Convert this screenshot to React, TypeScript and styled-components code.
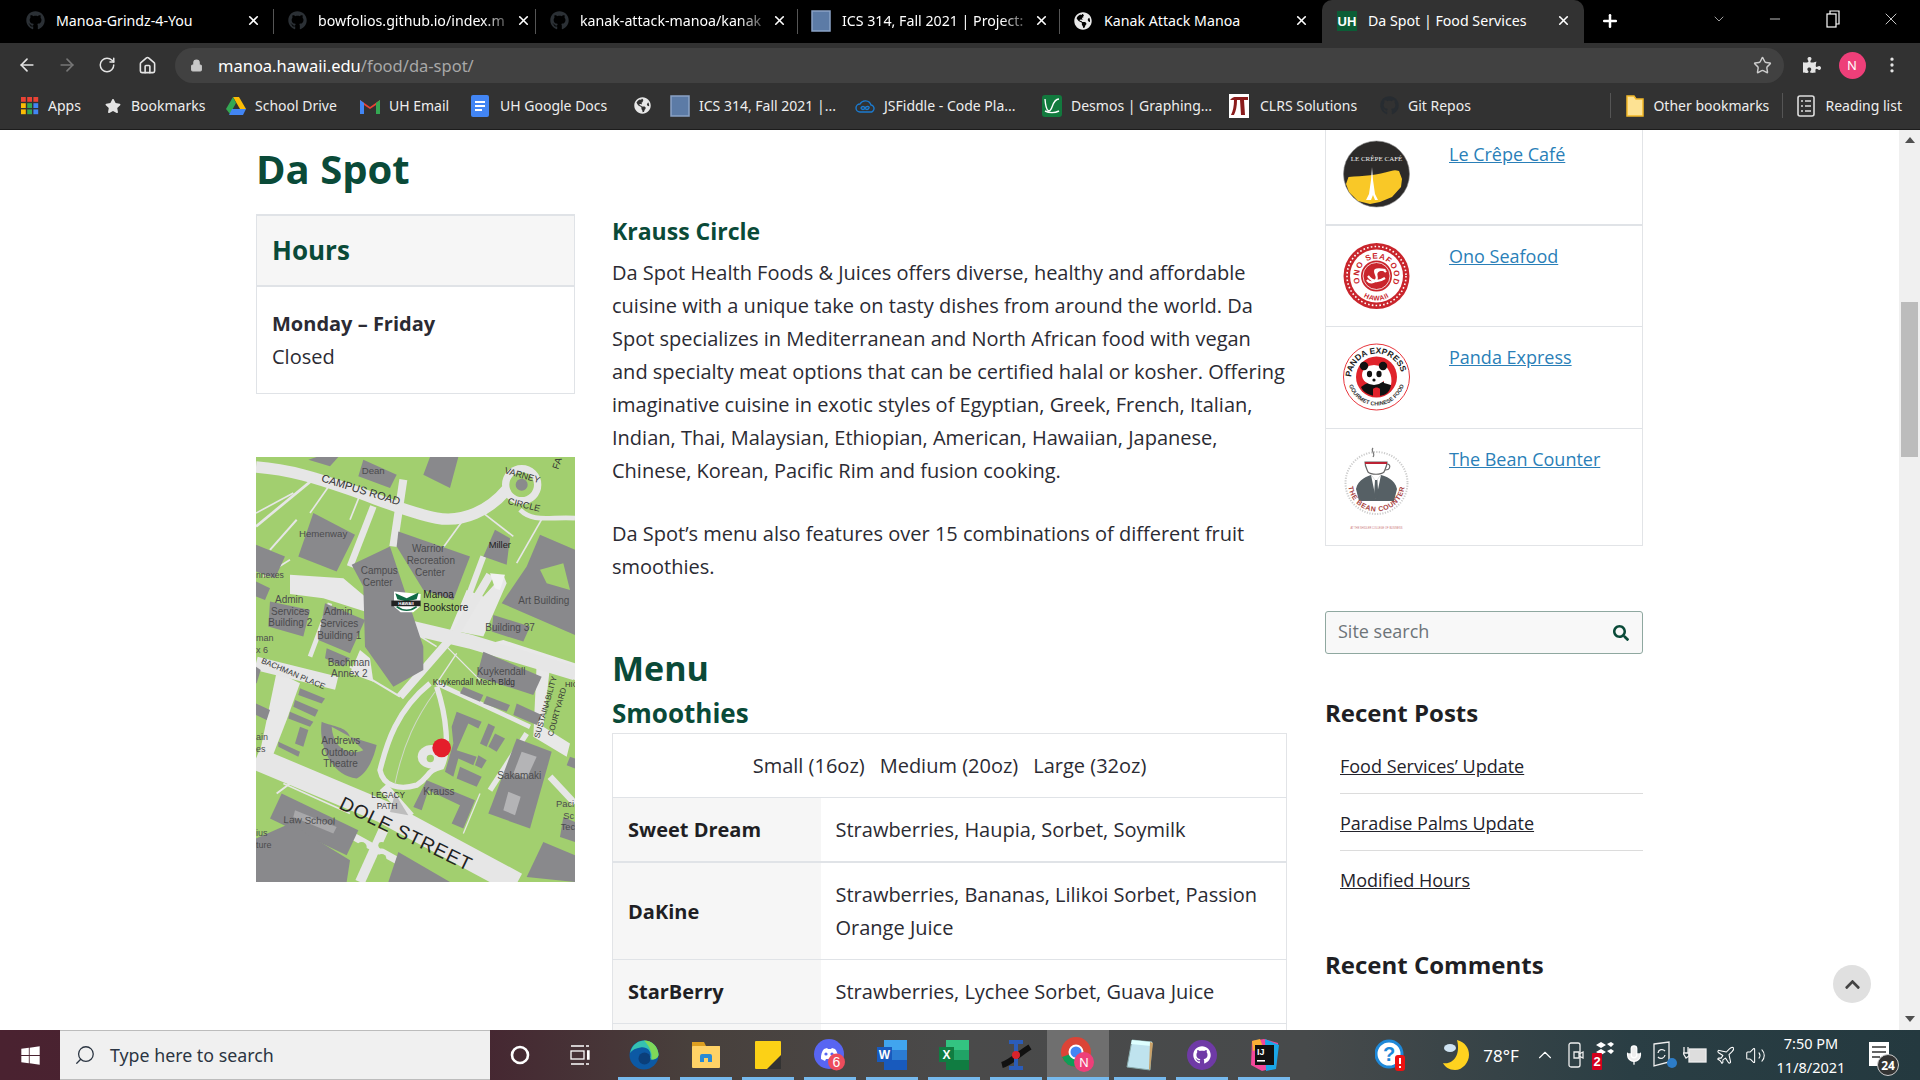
import React from "react";
import styled, { createGlobalStyle } from "styled-components";
import { ArrowLeft, ArrowRight, RotateCw, Home, Lock, Star, MoreVertical, Plus, X, Minus, ChevronDown, ChevronUp, Search, Mic, Plane, Volume2 } from "lucide-react";
import { FaGithub, FaWindows, FaGlobeAmericas, FaPuzzlePiece, FaStar, FaChevronUp, FaSearch } from "react-icons/fa";

const Global = createGlobalStyle`
  html, body { margin: 0; padding: 0; width: 1920px; height: 1080px; overflow: hidden; background: #fff; }
  * { box-sizing: border-box; }
`;
const UI = `"Noto Sans", "Open Sans", sans-serif`;
const SITE = `"Open Sans", "Noto Sans", sans-serif`;
const GREEN = "#0a4a38";
const Screen = styled.div`width:1920px;height:1080px;display:flex;flex-direction:column;overflow:hidden;font-family:${SITE};`;

/* Browser chrome */
const TabStrip = styled.div`height:43px;background:#000;display:flex;align-items:stretch;padding-left:12px;color:#fff;font-family:${UI};flex:none;`;
const Tab = styled.div<{ $active?: boolean }>`
  width:262px;height:43px;display:flex;align-items:center;gap:11px;padding:0 13px 2px ${p=>p.$active?"15px":"13px"};
  position:relative;font-size:14.2px;background:${p=>p.$active?"#323232":"transparent"};
  border-radius:${p=>p.$active?"10px 10px 0 0":"0"};
  ${p=>p.$active?"":"&::after{content:'';position:absolute;right:0;top:9px;bottom:9px;width:1px;background:#555;}"}
`;
const LastTab = styled(Tab)`&::after{display:none;}`;
const TabIcon = styled.span`width:20px;height:20px;display:flex;align-items:center;justify-content:center;flex:none;`;
const TabTitle = styled.span<{ $fade?: boolean }>`flex:1;white-space:nowrap;${p=>p.$fade?"-webkit-mask-image:linear-gradient(90deg,#000 88%,rgba(0,0,0,.35));":""}`;
const TabClose = styled(X)`flex:none;width:15px;height:15px;stroke-width:2.6;`;
const NewTab = styled.div`width:52px;padding-bottom:2px;display:flex;align-items:center;justify-content:center;`;
const WindowControls = styled.div`margin-left:auto;display:flex;align-items:flex-start;color:#eee;`;
const WinBtn = styled.div<{ $w: number }>`width:${p=>p.$w}px;height:38px;display:flex;align-items:center;justify-content:center;`;

const Toolbar = styled.div`height:44px;background:#323232;display:flex;align-items:center;padding:0 8px 0 7px;color:#ddd;flex:none;`;
const ToolBtn = styled.div<{ $dim?: boolean }>`width:40px;height:40px;display:flex;align-items:center;justify-content:center;color:${p=>p.$dim?"#777":"#e4e4e4"};flex:none;`;
const Address = styled.div`flex:1;height:35px;margin-left:8px;margin-right:8px;background:#414141;border-radius:18px;display:flex;align-items:center;padding:0 12px 0 15px;font-family:${UI};font-size:16.5px;color:#fff;gap:15px;`;
const Url = styled.span`flex:1;`;
const UrlDim = styled.span`color:#a8a8a8;`;
const Avatar = styled.div`width:27px;height:27px;border-radius:50%;background:#ee3f79;display:flex;align-items:center;justify-content:center;font-size:13px;color:#fff;font-family:${UI};`;

const Bookmarks = styled.div`height:43px;background:#323232;display:flex;align-items:center;padding:0 0 5px 20px;color:#eee;font-family:${UI};font-size:14px;flex:none;border-bottom:1px solid #1c1c1c;`;
const Bookmark = styled.div<{ $w?: number; $gap?: number; $pl?: number }>`width:${p=>p.$w?p.$w+"px":"auto"};display:flex;align-items:center;gap:${p=>p.$gap??9}px;padding-left:${p=>p.$pl??0}px;white-space:nowrap;flex:none;`;
const BmIcon = styled.span`width:20px;height:20px;display:flex;align-items:center;justify-content:center;flex:none;`;
const BmSep = styled.span`width:1px;height:25px;background:#555;flex:none;`;
const BmRight = styled.div`margin-left:auto;display:flex;align-items:center;padding-right:18px;`;

/* Page */
const Page = styled.div`flex:1;min-height:0;display:flex;position:relative;overflow:hidden;background:#fff;color:#2b2b33;font-size:20px;line-height:33px;`;
const Viewport = styled.div`flex:1;padding-left:256px;overflow:hidden;`;
const Shell = styled.div`display:flex;gap:38px;align-items:flex-start;`;
const MainArea = styled.div`width:1031px;flex:none;padding-top:15px;`;
const PageTitle = styled.h1`margin:0 0 21px;font-size:40px;line-height:48px;font-weight:700;color:${GREEN};`;
const Columns = styled.div`display:flex;gap:37px;align-items:flex-start;`;
const LeftCol = styled.div`width:319px;flex:none;`;
const HoursCard = styled.div`border:1px solid #e0e3e7;border-top-width:2px;`;
const HoursHead = styled.div`height:71px;background:#f6f6f6;border-bottom:2px solid #e0e3e7;display:flex;align-items:center;padding-left:15px;font-size:26px;font-weight:700;color:${GREEN};`;
const HoursBody = styled.div`padding:20px 15px 13px;height:106px;`;
const Strong = styled.div`font-weight:700;`;
const MapFrame = styled.div`margin-top:63px;width:319px;height:425px;`;
const MapSvg = styled.svg`display:block;width:100%;height:100%;`;
const Article = styled.div`width:675px;flex:none;`;
const Location = styled.h3`margin:0 0 8px;font-size:23px;line-height:34px;font-weight:700;color:${GREEN};`;
const Para = styled.p<{ $last?: boolean }>`margin:0 0 ${p=>p.$last?0:30}px;`;
const MenuTitle = styled.h2`margin:63px 0 5px;font-size:34px;line-height:44px;font-weight:700;color:${GREEN};`;
const Sub = styled.h3`margin:0 0 2px;font-size:26px;line-height:36px;font-weight:700;color:${GREEN};`;
const MenuTable = styled.table`width:675px;border-collapse:collapse;table-layout:fixed;border:1px solid #e2e4e7;`;
const NameCol = styled.col`width:208px;`;
const Row = styled.tr<{ $thick?: boolean }>`border-bottom:${p=>p.$thick?"2px":"1px"} solid #e0e3e7;`;
const SizeCell = styled.td`padding:15px;text-align:center;`;
const NameCell = styled.th`padding:15px;background:#f6f6f6;text-align:left;font-weight:700;color:#1f1f24;`;
const DescCell = styled.td`padding:15px;`;
const Gap = styled.span`display:inline-block;width:15px;`;

const Sidebar = styled.aside`width:318px;flex:none;`;
const Places = styled.div`margin-top:-7px;border:1px solid #e2e4e7;border-top:none;`;
const Place = styled.div<{ $h: number; $thick?: boolean; $pt?: number }>`height:${p=>p.$h}px;display:flex;align-items:flex-start;padding:${p=>p.$pt??15}px 0 0 17px;gap:39px;border-bottom:${p=>p.$thick?"2px":"1px"} solid #e0e3e7;&:last-child{border-bottom:none;}`;
const Logo = styled.svg<{ $mt?: number }>`width:67px;flex:none;margin-top:${p=>p.$mt??1}px;`;
const PlaceLink = styled.a`color:#2a7fb8;text-decoration:underline;font-size:18px;line-height:30px;`;
const SearchBox = styled.div`margin-top:65px;height:43px;border:1px solid #8fa8a0;border-radius:3px;background:#f8f8f8;display:flex;align-items:center;justify-content:space-between;padding:0 13px 3px 12px;color:#6d7478;font-size:18px;`;
const SearchIcon = styled(FaSearch)`margin-top:3px;`;
const WidgetTitle = styled.h3<{ $mt: number }>`margin:${p=>p.$mt}px 0 0;font-size:24px;line-height:36px;font-weight:700;color:#1f1f24;`;
const PostList = styled.ul`list-style:none;margin:6px 0 0;padding:0 0 0 15px;`;
const Post = styled.li`padding:15px 0 13px;line-height:28px;font-size:18px;border-bottom:1px solid #dcdcdc;&:last-child{border-bottom:none;}`;
const PostLink = styled.a`color:#23232b;text-decoration:underline;`;
const BackTop = styled.div`position:absolute;left:1833px;top:835px;width:38px;height:38px;border-radius:50%;background:#e0e0e0;color:#444;display:flex;align-items:center;justify-content:center;`;
const Scrollbar = styled.div`width:21px;flex:none;background:#f0f0f0;display:flex;flex-direction:column;align-items:center;justify-content:space-between;padding:7px 0 8px;position:relative;`;
const Thumb = styled.div`position:absolute;left:2px;right:2px;top:172px;height:155px;background:#bcbcbc;`;
const ArrowUp = styled.div`width:0;height:0;border:5px solid transparent;border-bottom:6px solid #505050;border-top:none;`;
const ArrowDown = styled.div`width:0;height:0;border:5px solid transparent;border-top:6px solid #505050;border-bottom:none;`;

/* Taskbar */
const Taskbar = styled.div`height:50px;flex:none;display:flex;align-items:stretch;background:linear-gradient(90deg,#4a2230 0%,#452430 24%,#48403c 36%,#4a4a4a 50%,#474a4b 68%,#2a3e44 85%,#24393f 100%);color:#fff;font-family:${UI};`;
const StartBtn = styled.div`width:60px;display:flex;align-items:center;justify-content:center;`;
const SearchBar = styled.div`width:430px;background:#f0f0f0;border-top:1px solid #bcbcbc;border-bottom:1px solid #bcbcbc;display:flex;align-items:center;gap:14px;padding-left:14px;color:#2b3542;font-size:17.8px;`;
const MirrorSearch = styled(Search)`transform:scaleX(-1);`;
const SysCell = styled.div<{ $w: number }>`width:${p=>p.$w}px;display:flex;align-items:center;justify-content:center;flex:none;`;
const AppCell = styled.div<{ $on?: boolean }>`width:62px;display:flex;align-items:center;justify-content:center;position:relative;flex:none;background:${p=>p.$on?"#6f6f6f":"transparent"};
  &::after{content:'';position:absolute;left:${p=>p.$on?0:5}px;right:${p=>p.$on?0:5}px;bottom:0;height:3px;background:#76b9ed;}`;
const Tray = styled.div`margin-left:auto;display:flex;align-items:stretch;padding-right:14px;`;
const TrayCell = styled.div<{ $w: number }>`width:${p=>p.$w}px;display:flex;align-items:center;justify-content:center;flex:none;position:relative;`;
const Temp = styled.span`font-size:17px;`;
const Clock = styled.div`text-align:center;font-size:14.5px;line-height:24px;`;
const Badge = styled.span`position:absolute;right:7px;bottom:4px;width:22px;height:22px;border-radius:50%;background:#333;border:1.5px solid #ccc;font-size:12px;font-weight:700;display:flex;align-items:center;justify-content:center;`;

const Gh = ({ c = "#2b3035" }: { c?: string }) => <FaGithub size={19} color={c} />;
const Sq = () => (<svg width="20" height="22" viewBox="0 0 20 22"><rect x="1" y="1" width="18" height="20" fill="#5c7ba6" stroke="#8aa3c6" strokeWidth="1.5"/></svg>);
const UhIcon = () => (<svg width="20" height="20" viewBox="0 0 20 20"><rect width="20" height="20" fill="#0b5d36"/><text x="10" y="15" fontSize="13" fontWeight="700" fill="#fff" textAnchor="middle" fontFamily="Liberation Sans">UH</text></svg>);
const Apps = () => (<svg width="18" height="18" viewBox="0 0 18 18">{[["#ea4335","#ea4335","#ea4335"],["#fbbc05","#34a853","#4285f4"],["#fbbc05","#34a853","#4285f4"]].flatMap((r,y)=>r.map((c,x)=><rect key={x+"-"+y} x={x*6.2} y={y*6.2} width="4.8" height="4.8" fill={c}/>))}</svg>);
const Drive = () => (<svg width="20" height="18" viewBox="0 0 20 18"><path d="M7 0h6l7 12h-6z" fill="#fbbc05"/><path d="M7 0l3 6-6 11-4-5z" fill="#34a853"/><path d="M6 12h14l-3 6H3z" fill="#4285f4"/></svg>);
const Gmail = () => (<svg width="20" height="16" viewBox="0 0 20 16"><path d="M0 2l10 7 10-7v14h-4V7l-6 4-6-4v9H0z" fill="#ea4335"/><path d="M0 2v14h4V5z" fill="#4285f4"/><path d="M16 5v11h4V2z" fill="#34a853"/></svg>);
const Docs = () => (<svg width="18" height="22" viewBox="0 0 18 22"><rect width="18" height="22" rx="2" fill="#4285f4"/><path d="M4 7h10M4 11h10M4 15h7" stroke="#fff" strokeWidth="2"/></svg>);
const Fiddle = () => (<svg width="20" height="18" viewBox="0 0 20 18" fill="none" stroke="#1b7bd0" strokeWidth="1.4"><path d="M5 15a4 4 0 0 1 0-8 6 6 0 0 1 11 1 3.5 3.5 0 0 1-1 7z"/><path d="M6 11c1-2 3-2 4 0s3 2 4 0-3-2-4 0-3 2-4 0z"/></svg>);
const Desmos = () => (<svg width="20" height="22" viewBox="0 0 20 22"><rect width="20" height="22" rx="3" fill="#127a3e"/><path d="M3 4c1 14 5 14 7 8s5-8 7-8M3 16c4 2 10 2 14 0" stroke="#fff" strokeWidth="1.4" fill="none"/></svg>);
const Pi = () => (<svg width="20" height="24" viewBox="0 0 20 24"><rect width="20" height="24" fill="#fff"/><path d="M1 6c3-4 6-3 9-3h9v3h-4l1 15h-4l-1-15H8c0 6-1 11-3 15H2c2-4 3-9 3-15-2 0-3 0-4 0z" fill="#8a1c1c"/></svg>);
const Folder = () => (<svg width="18" height="22" viewBox="0 0 18 22"><path d="M1 1h7l2 3h7v17H1z" fill="#fde293" stroke="#f2b829" strokeWidth="1.5"/></svg>);
const Reading = () => (<svg width="18" height="22" viewBox="0 0 18 22" fill="none" stroke="#ddd" strokeWidth="1.6"><rect x="1" y="1" width="16" height="20" rx="2"/><path d="M4 6h2M8 6h6M4 11h2M8 11h6M4 16h2M8 16h6"/></svg>);
const Restore = () => (<svg width="14" height="18" viewBox="0 0 14 18" fill="none" stroke="#fff" strokeWidth="1.2"><rect x="1" y="4" width="9" height="13"/><path d="M4 4V1h9v13h-3"/></svg>);

const Edge = () => (<svg width="30" height="30" viewBox="0 0 30 30"><circle cx="15" cy="15" r="14.5" fill="#0c59a4"/><path d="M1 13C3 4 10 .5 15 .5c8 0 14 6 14.5 14 0 3-3 5-7 5-2 0-3-1-1-3 1-6-4-10-10-9C7 8 3 10 1 13z" fill="#35c1b1"/><path d="M15 .5c8 0 14 6 14.5 14 0 3-3 5-7 5 1-6-1-12-7.5-19z" fill="#7fd858"/><circle cx="15.5" cy="18.5" r="6" fill="#0b3f7a"/></svg>);
const Explorer = () => (<svg width="28" height="26" viewBox="0 0 28 26"><path d="M0 0h12l2 4h14v4H0z" fill="#dd9f20"/><rect y="4" width="28" height="22" rx="1" fill="#ffd266"/><path d="M8 20v-6a2 2 0 0 1 2-2h8a2 2 0 0 1 2 2v6h-4v-4h-4v4z" fill="#2a8ad4"/></svg>);
const Sticky = () => (<svg width="26" height="28" viewBox="0 0 26 28"><rect width="26" height="28" rx="1" fill="#fcd116"/><path d="M26 14v14H12z" fill="#333"/></svg>);
const Discord = () => (<svg width="32" height="32" viewBox="0 0 32 32"><circle cx="15" cy="15" r="15" fill="#5865f2"/><path d="M7 20c-.3-4 1-8 3-10l3-1 1 1h3l1-1 3 1c2 2 3 6 3 10l-3 2-1-2h-8l-1 2z" fill="#fff"/><circle cx="12" cy="15" r="1.6" fill="#5865f2"/><circle cx="18" cy="15" r="1.6" fill="#5865f2"/><circle cx="22.5" cy="23" r="8.5" fill="#ed4c5c"/><text x="22.5" y="28" fontSize="14" fill="#fff" textAnchor="middle" fontFamily="Liberation Sans">6</text></svg>);
const Office = ({ a, b, c, l }: { a: string; b: string; c: string; l: string }) => (<svg width="30" height="30" viewBox="0 0 30 30"><rect x="7" width="23" height="10" fill={a}/><rect x="7" y="10" width="23" height="10" fill={b}/><rect x="7" y="20" width="23" height="10" fill={c}/><rect y="7" width="15" height="15" fill={c}/><text x="7.5" y="19" fontSize="12" fontWeight="700" fill="#fff" textAnchor="middle" fontFamily="Liberation Sans">{l}</text></svg>);
const Snip = () => (<svg width="32" height="32" viewBox="0 0 32 32"><path d="M2 26C10 24 20 14 30 8" stroke="#111" strokeWidth="6" fill="none"/><path d="M9 3h14M9 29h14M16 3v26" stroke="#2b5cb8" strokeWidth="4"/><circle cx="16" cy="16" r="4" fill="#d8232a"/></svg>);
const Chrome = () => (<svg width="34" height="36" viewBox="0 0 34 36"><circle cx="15" cy="15" r="15" fill="#db4437"/><path d="M15 15L1 20a15 15 0 0 0 14 10z" fill="#0f9d58"/><path d="M15 15l12 8a15 15 0 0 1-12 7z" fill="#fbbc05"/><circle cx="15" cy="15" r="6.5" fill="#4285f4" stroke="#fff" strokeWidth="2"/><circle cx="23" cy="25" r="10" fill="#ee3f79"/><text x="23" y="30" fontSize="13" fill="#fff" textAnchor="middle" fontFamily="Liberation Sans">N</text></svg>);
const Notepad = () => (<svg width="28" height="32" viewBox="0 0 28 32"><path d="M6 1l20 2-2 28L1 28z" fill="#bfe3ee" stroke="#8aa" strokeWidth="1"/><path d="M6 1l20 2-1 4L5 5z" fill="#dff"/><path d="M24 3l3 1-3 27-1-1z" fill="#caa26a"/></svg>);
const GitHubApp = () => (<svg width="30" height="30" viewBox="0 0 30 30"><circle cx="15" cy="15" r="15" fill="#6f3aa6"/><g transform="translate(6 6) scale(.0352)"><path fill="#fff" d="M256 8C119 8 8 119 8 256c0 110 71 203 170 236 12 2 17-5 17-12v-44c-69 15-84-29-84-29-11-29-28-37-28-37-22-15 2-15 2-15 25 2 38 26 38 26 22 38 58 27 72 21 2-16 9-27 16-33-55-6-113-28-113-122 0-27 10-49 25-66-2-6-11-31 2-65 0 0 21-7 68 25 20-6 41-8 62-8s42 3 62 8c47-32 68-25 68-25 14 34 5 59 2 65 16 17 25 39 25 66 0 95-58 116-113 122 9 8 17 23 17 46v68c0 7 4 14 17 12 99-33 170-126 170-236C504 119 393 8 256 8z"/></g></svg>);
const Idea = () => (<svg width="30" height="32" viewBox="0 0 30 32"><path d="M3 2l12-2 14 4-2 24-14 4L2 26z" fill="#f5479b"/><path d="M16 0l14 6-3 24-10 2z" fill="#1aa6e8"/><path d="M3 2l8-2 3 8-10 4z" fill="#fbb034"/><rect x="6" y="6" width="19" height="20" fill="#111"/><text x="8" y="16" fontSize="9" fontWeight="700" fill="#fff" fontFamily="Liberation Sans">IJ</text><rect x="8" y="21" width="8" height="1.6" fill="#fff"/></svg>);
const Help = () => (<svg width="30" height="32" viewBox="0 0 30 32"><circle cx="14" cy="15" r="13" fill="#fff" stroke="#1e88d8" strokeWidth="3"/><text x="14" y="22" fontSize="20" fontWeight="700" fill="#1e88d8" textAnchor="middle" fontFamily="Liberation Sans">?</text><rect x="20" y="16" width="10" height="16" rx="3" fill="#e11"/><rect x="24" y="19" width="2" height="6" fill="#fff"/><rect x="24" y="27" width="2" height="2" fill="#fff"/></svg>);
const Moon = () => (<svg width="26" height="30" viewBox="0 0 26 30"><path d="M14 0c8 2 12 8 12 15s-6 15-14 15C6 30 2 27 0 23c10 2 18-8 14-23z" fill="#ffd21f"/><ellipse cx="7" cy="8" rx="6" ry="4" fill="#cfe3f2"/></svg>);
const MeetNow = () => (<svg width="16" height="26" viewBox="0 0 16 26" fill="none" stroke="#eee" strokeWidth="1.3"><rect x="1" y="1" width="11" height="24" rx="2"/><path d="M6 10h5v6H6zM11 12l4-2v6l-4-2z"/></svg>);
const Dropbox = () => (<svg width="22" height="30" viewBox="0 0 22 30"><path d="M9 2l5 3-5 3-5-3zM19 2l3 2-3 3-4-3zM9 9l5 3-5 3-5-3zM19 9l3 2-3 3-4-3z" fill="#fff"/><rect y="13" width="10" height="17" rx="1" fill="#d4001c"/><text x="5" y="26" fontSize="13" fontWeight="700" fill="#fff" textAnchor="middle" fontFamily="Liberation Sans">2</text></svg>);
const Sync = () => (<svg width="26" height="28" viewBox="0 0 26 28" fill="none" stroke="#eee" strokeWidth="1.3"><path d="M2 3l15-2v20L2 25z"/><path d="M6 12a4 4 0 0 1 7-2M13 14a4 4 0 0 1-7 2"/><circle cx="20" cy="22" r="5" fill="#2d7dc8" stroke="none"/></svg>);
const Battery = () => (<svg width="24" height="20" viewBox="0 0 24 20" fill="none" stroke="#eee" strokeWidth="1.3"><rect x="6" y="4" width="17" height="13" fill="#ddd"/><path d="M1 2v6M5 2v6M0 8h6v3l-3 2z"/></svg>);
const NoteIcon = () => (<svg width="20" height="26" viewBox="0 0 20 26"><path d="M0 0h20v24H0z" fill="#fff"/><path d="M3 5h14M3 10h14M3 15h8" stroke="#333" strokeWidth="1.6"/></svg>);

const CampusMap = () => {
  const b = "#89898c";
  const bldg = [
    "340,30 440,75 420,115 325,80",
    "540,22 625,22 600,115 520,75",
    "200,22 265,22 240,50 175,30",
    "190,190 315,255 260,365 145,320",
    "420,290 520,590 520,660 430,710 345,590 340,410 305,345",
    "445,245 660,320 610,450 520,420 440,290",
    "735,240 780,265 770,345 700,320",
    "870,255 975,300 975,555 755,460 830,350",
    "18,285 105,320 75,385 18,365",
    "18,395 60,415 45,450 18,440",
    "60,455 180,480 160,560 55,530",
    "225,460 345,510 300,610 205,570",
    "230,595 300,625 280,650 225,625",
    "730,495 840,530 820,575 725,545",
    "700,605 875,680 850,735 680,680",
    "640,710 700,735 690,755 630,730",
    "710,738 780,765 770,785 700,760",
    "800,760 875,795 860,825 790,795",
    "620,785 695,815 685,835 655,820 620,900 680,920 670,945 625,925 610,980 585,965 610,880 605,830",
    "715,820 735,830 710,890 690,880",
    "735,850 765,865 740,905 715,890",
    "685,915 710,930 695,955 675,945",
    "630,950 695,980 680,1010 620,985",
    "530,990 675,1050 640,1135 605,1120 630,1065 535,1020 515,1080 490,1070",
    "800,865 905,905 840,1135 715,1090",
    "150,715 225,745 215,760 145,735",
    "135,750 205,780 195,800 130,770",
    "120,785 190,815 180,830 115,805",
    "150,830 175,840 160,890 135,880",
    "85,875 150,905 145,920 85,890",
    "18,760 60,780 50,810 18,795",
    "95,1030 325,1140 290,1215 60,1105",
    "18,1165 120,1120 300,1230 290,1295 18,1295",
    "445,1205 600,1295 415,1295",
    "880,1175 975,1215 975,1295 830,1280",
    "960,920 975,925 975,955 950,945",
    "940,1100 975,1115 975,1175 930,1160",
    "18,650 32,660 20,700 18,700",
  ];
  const plazas = [
    "120,375 280,385 345,440 345,485 220,445 120,432",
    "650,420 700,440 760,375 770,400 700,560 600,540",
    "80,665 150,700 110,810 65,925 30,905",
    "330,600 360,625 370,695 300,670",
    "760,570 975,640 975,690 680,590",
    "860,640 900,650 880,830 960,880 950,920 850,860",
  ];
  const roads: [string, number][] = [
    ["M18 52 C120 60 200 85 300 120 S480 190 560 205 S720 180 770 120", 34],
    ["M18 925 L400 1085 L800 1300", 68],
    ["M470 530 L660 575 L975 670", 42],
    ["M18 640 L260 700", 40],
    ["M180 620 L240 460", 14],
    ["M450 740 L620 545 L720 375", 24],
    ["M460 90 L430 290", 24],
    ["M370 170 L300 350", 20],
    ["M700 320 L640 480", 18],
    ["M810 180 C850 220 900 200 975 205", 14],
    ["M830 850 L720 1020", 16],
    ["M560 700 L840 830", 14],
    ["M300 650 L450 740", 6],
    ["M400 1010 L480 1100", 30],
    ["M900 980 L975 1060", 20],
    ["M330 1295 L400 1140", 30],
    ["M240 1120 L440 1230", 22],
    ["M18 230 L200 80", 8], ["M18 190 L130 130", 5], ["M60 300 L140 210", 6],
    ["M250 90 L180 190", 5], ["M340 110 L300 210", 5], ["M640 210 L560 320", 5],
    ["M700 190 L790 260", 5], ["M590 590 L700 700", 4], ["M620 610 L560 700", 4],
    ["M480 540 L560 590", 5], ["M880 200 L800 340", 5], ["M640 1150 L690 1030", 4],
    ["M40 380 L120 330", 5], ["M100 1000 L300 1090", 5], ["M120 1000 L80 1030", 6],
  ];
  return (
    <MapSvg viewBox="18 22 957 1273" preserveAspectRatio="none" fontFamily="Liberation Sans" fill="#4c4c4e">
      <rect x="18" y="22" width="957" height="1273" fill="#a2cf6f" />
      {plazas.map((p, i) => <polygon key={i} points={p} fill="#e8e8e8" />)}
      {roads.map(([d, w], i) => <path key={i} d={d} fill="none" stroke="#e6e6e6" strokeWidth={w} />)}
      <path d="M540 700 C440 780 410 880 390 960 C400 1010 450 1020 500 1005 C540 980 530 960 575 950 C600 900 590 800 560 710" fill="none" stroke="#e6e6e6" strokeWidth="16" />
      <path d="M555 725 C500 800 460 880 435 1000" fill="none" stroke="#cfd9c6" strokeWidth="3" />
      <ellipse cx="545" cy="920" rx="42" ry="35" fill="#e6e6e6" />
      <circle cx="541" cy="925" r="11" fill="#a2cf6f" />
      <circle cx="815" cy="105" r="48" fill="#a2cf6f" stroke="#e6e6e6" strokeWidth="22" />
      <circle cx="815" cy="105" r="18" fill="#8a8a8c" />
      {bldg.map((p, i) => <polygon key={i} points={p} fill={b} />)}
      <path d="M215 815 C205 880 240 975 320 985 C350 970 370 930 380 885 L300 860 C290 830 250 830 215 815z" fill={b} />
      <path d="M245 830 C250 890 290 920 340 900 L300 860 Z" fill="#a2cf6f" />
      <path d="M870 360 L890 400 L960 420 L940 340" fill="#a2cf6f" />
      <polygon points="765,375 750,420 735,415 720,370" fill="#f1f1f1" />
      <polygon points="815,905 860,920 830,985 790,970" fill="#b4b4b6" />
      <polygon points="775,1025 812,1040 795,1095 760,1080" fill="#b4b4b6" />
      <polygon points="135,1080 260,1130 250,1150 130,1100" fill="#a8a8aa" />
      <circle cx="335" cy="1190" r="15" fill="#a2cf6f" /><circle cx="395" cy="1185" r="10" fill="#a2cf6f" /><circle cx="395" cy="1225" r="14" fill="#a2cf6f" />
      <path d="M435 1030 L475 1095 L420 1085z" fill="#bdbdbd" />
      <text transform="translate(212 95) rotate(17)" fontSize="33" fill="#333">CAMPUS ROAD</text>
      <text transform="translate(264 1073) rotate(26)" fontSize="58" fill="#222" letterSpacing="3">DOLE STREET</text>
      <text transform="translate(32 638) rotate(23)" fontSize="24" fill="#333">BACHMAN PLACE</text>
      <text x="762" y="70" transform="rotate(16 762 70)" fontSize="27" fill="#333">VARNEY</text>
      <text x="772" y="162" transform="rotate(14 772 162)" fontSize="27" fill="#333">CIRCLE</text>
      <text x="335" y="72" fontSize="29">Dean</text>
      <text x="147" y="262" fontSize="29">Hemenway</text>
      <text x="486" y="307" fontSize="30">Warrior</text>
      <text x="470" y="342" fontSize="30">Recreation</text>
      <text x="495" y="377" fontSize="30">Center</text>
      <text x="332" y="372" fontSize="30">Campus</text>
      <text x="338" y="407" fontSize="30">Center</text>
      <text x="716" y="295" fontSize="28" fill="#222">Miller</text>
      <text x="520" y="445" fontSize="30" fill="#222">Manoa</text>
      <text x="520" y="482" fontSize="30" fill="#222">Bookstore</text>
      <text x="805" y="462" fontSize="30">Art Building</text>
      <text x="706" y="542" fontSize="30">Building 37</text>
      <text x="18" y="384" fontSize="26">nnexes</text>
      <text x="75" y="458" fontSize="30">Admin</text><text x="63" y="494" fontSize="30">Services</text><text x="55" y="529" fontSize="30">Building 2</text>
      <text x="222" y="495" fontSize="30">Admin</text><text x="210" y="531" fontSize="30">Services</text><text x="202" y="566" fontSize="30">Building 1</text>
      <text x="233" y="647" fontSize="30">Bachman</text><text x="243" y="682" fontSize="30">Annex 2</text>
      <text x="18" y="573" fontSize="27">man</text><text x="18" y="608" fontSize="27">x 6</text>
      <text x="680" y="674" fontSize="30">Kuykendall</text>
      <text x="548" y="705" fontSize="25" fill="#333">Kuykendall Mech Bldg</text>
      <text x="214" y="882" fontSize="30">Andrews</text><text x="214" y="917" fontSize="30">Outdoor</text><text x="220" y="952" fontSize="30">Theatre</text>
      <text x="364" y="1044" fontSize="25" fill="#333">LEGACY</text><text x="380" y="1075" fontSize="25" fill="#333">PATH</text>
      <text x="520" y="1034" fontSize="30">Krauss</text>
      <text x="742" y="988" fontSize="30">Sakamaki</text>
      <text x="100" y="1118" fontSize="30" transform="rotate(2 100 1118)">Law School</text>
      <text x="918" y="1070" fontSize="28">Paci</text><text x="940" y="1106" fontSize="28">Sc</text><text x="932" y="1140" fontSize="28">Tec</text>
      <text x="18" y="870" fontSize="27">ain</text><text x="18" y="905" fontSize="27">es</text>
      <text x="18" y="1158" fontSize="27">ius</text><text x="18" y="1192" fontSize="27">ture</text>
      <text transform="translate(868 865) rotate(-74)" fontSize="24" fill="#333">SUSTAINABILITY</text>
      <text transform="translate(908 860) rotate(-74)" fontSize="24" fill="#333">COURTYARD</text>
      <text x="945" y="712" fontSize="23" fill="#333">HIG</text>
      <text transform="translate(925 60) rotate(-72)" fontSize="28" fill="#333">FA</text>
      <path d="M432 425 L512 432 L510 470 L490 487 L452 487 L432 470z" fill="#fff" /><path d="M436 430 L470 445 L506 428 L500 448 L470 455 L442 448z" fill="#0f6b45" /><rect x="424" y="452" width="88" height="17" fill="#222" /><text x="468" y="466" fontSize="13" fontWeight="700" fill="#fff" textAnchor="middle">HAWAII</text><path d="M440 470 Q470 492 500 470" stroke="#0f6b45" strokeWidth="5" fill="none"/>
      <circle cx="575" cy="893" r="28" fill="#e41e2b" />
    </MapSvg>
  );
};

const CrepeLogo = () => (
  <Logo viewBox="0 0 67 68" height="68">
    <circle cx="33.5" cy="34" r="33" fill="#2c2a29" stroke="#888" strokeWidth=".6" />
    <path d="M5.5 37C20 36 35 35 48 31c3-1 5-1 8 0l3 8-1 8-9 10-12 5-10 2-12-3-9-9-3-8z" fill="#f9c827" />
    <path d="M23 60l3-6 2-14 1-13 1 13 2 14 3 6h-3l-2-5-2 5z" fill="#fff" />
    <text x="33.5" y="21" fontSize="7" fill="#f1f1f1" textAnchor="middle" fontFamily="Liberation Serif">LE CRÊPE CAFÉ</text>
  </Logo>
);
const OnoLogo = () => (
  <Logo viewBox="0 0 67 68" height="68">
    <defs>
      <path id="onoTop" d="M18.3 42.750A17.500 17.500 0 1 1 48.700 42.750" />
      <path id="onoBot" d="M13.400 48A24.500 24.500 0 0 0 53.600 48" />
    </defs>
    <circle cx="33.5" cy="34" r="33" fill="#c9252c" />
    <circle cx="33.5" cy="34" r="29.5" fill="none" stroke="#fff" strokeWidth="1.6" strokeDasharray="1.6 2.2" />
    <circle cx="33.5" cy="34" r="26.5" fill="#fff" />
    <circle cx="33.5" cy="34" r="15.5" fill="#c9252c" />
    <circle cx="33.5" cy="34" r="13.5" fill="none" stroke="#fff" strokeWidth=".8" />
    <path d="M24 38c4 5 11 1 9.500-4s-5-8 9-6M43 30c-4-5-11-1-9.500 4M25 34c5 7 11 6 17 2" fill="none" stroke="#fff" strokeWidth="2.2" />
    <text fontSize="8" fontWeight="700" fill="#c9252c" fontFamily="Liberation Sans" letterSpacing=".9"><textPath href="#onoTop" startOffset="2">ONO SEAFOOD</textPath></text>
    <text fontSize="6.800" fontWeight="700" fill="#c9252c" fontFamily="Liberation Sans" letterSpacing=".5" textAnchor="middle"><textPath href="#onoBot" startOffset="50%">HAWAII</textPath></text>
  </Logo>
);
const PandaLogo = () => (
  <Logo viewBox="0 0 67 68" height="68">
    <defs>
      <path id="pTop" d="M8 36a25.5 25.5 0 0 1 51 0" />
      <path id="pBot" d="M5 34a28.5 28.5 0 0 0 57 0" />
    </defs>
    <circle cx="33.5" cy="34" r="33" fill="#fff" stroke="#e8353c" strokeWidth="1" />
    <circle cx="33.5" cy="34" r="20.5" fill="#e0232b" />
    <text fontSize="8.4" fontWeight="700" fill="#1a1a1a" fontFamily="Liberation Sans"><textPath href="#pTop" startOffset="2">PANDA EXPRESS</textPath></text>
    <text fontSize="5.6" fontWeight="700" fill="#333" fontFamily="Liberation Sans" textAnchor="middle"><textPath href="#pBot" startOffset="50%">GOURMET CHINESE FOOD</textPath></text>
    <path d="M18 44c6-6 22-8 30-2-1 9-8 11-14 11s-14-3-16-9z" fill="#111" />
    <path d="M38 20c7 3 12 12 10 22l-7-2z" fill="#fff" />
    <ellipse cx="31" cy="32" rx="12" ry="10" fill="#fff" />
    <circle cx="21" cy="23" r="4.2" fill="#111" /><circle cx="40" cy="23" r="4.2" fill="#111" />
    <ellipse cx="26.500" cy="31" rx="2.600" ry="3.200" fill="#111" /><ellipse cx="36" cy="31" rx="2.600" ry="3.200" fill="#111" />
    <circle cx="31" cy="37" r="1.6" fill="#111" />
    <path d="M30 46c2-2 5-2 7 0v7h-7z" fill="#e0232b" />
  </Logo>
);
const BeanLogo = () => (
  <Logo viewBox="0 0 67 83" height="83" $mt={3}>
    <defs>
      <path id="bBot" d="M5 36a28.5 28.5 0 0 0 57 0" />
    </defs>
    <circle cx="33.5" cy="36" r="31" fill="none" stroke="#ccc" strokeWidth="2" strokeDasharray="1.2 1.4" />
    <path d="M30 1c-3 3 3 5 0 9" stroke="#777" strokeWidth="1.2" fill="none" />
    <path d="M22 15h22c0 5-2 7-3 10-3 3-13 3-16 0-1-3-3-5-3-10z" fill="#fff" stroke="#666" strokeWidth="1.2" />
    <rect x="22" y="15" width="22" height="2" fill="#b23" />
    <path d="M44 17c4 0 4 6-2 6" fill="none" stroke="#666" strokeWidth="1.2" />
    <path d="M13 42c2-10 12-13 15-14l5 6 5-6c4 1 14 4 16 14l-3 12H16z" fill="#566065" />
    <path d="M28 28l5 6 5-6-5 24z" fill="#fff" />
    <path d="M32 33h2.400l1 16-2.200 4-2.200-4z" fill="#566065" />
    <text fontSize="7" fontWeight="700" fill="#a94442" fontFamily="Liberation Sans" textAnchor="middle" letterSpacing=".6"><textPath href="#bBot" startOffset="50%">THE BEAN COUNTER</textPath></text>
    <text x="33.5" y="82" fontSize="2.6" fill="#c77" textAnchor="middle" fontFamily="Liberation Sans">AT THE SHIDLER COLLEGE OF BUSINESS</text>
  </Logo>
);

const tabs = [
  { t: "Manoa-Grindz-4-You", i: <Gh /> },
  { t: "bowfolios.github.io/index.m", i: <Gh />, f: true },
  { t: "kanak-attack-manoa/kanak", i: <Gh />, f: true },
  { t: "ICS 314, Fall 2021 | Project:", i: <Sq />, f: true },
];
const running = [<Edge />, <Explorer />, <Sticky />, <Discord />, <Office a="#41a5ee" b="#2b7cd3" c="#185abd" l="W" />, <Office a="#33c481" b="#21a366" c="#107c41" l="X" />, <Snip />];

export default function App() {
  return (
    <Screen>
      <Global />
      <TabStrip>
        {tabs.map(t => (
          <Tab key={t.t}><TabIcon>{t.i}</TabIcon><TabTitle $fade={t.f}>{t.t}</TabTitle><TabClose /></Tab>
        ))}
        <LastTab><TabIcon><FaGlobeAmericas size={18} color="#e8e8e8" /></TabIcon><TabTitle>Kanak Attack Manoa</TabTitle><TabClose /></LastTab>
        <Tab $active><TabIcon><UhIcon /></TabIcon><TabTitle>Da Spot | Food Services</TabTitle><TabClose /></Tab>
        <NewTab><Plus size={20} strokeWidth={3} /></NewTab>
        <WindowControls>
          <WinBtn $w={54}><ChevronDown size={16} strokeWidth={1} /></WinBtn>
          <WinBtn $w={58}><Minus size={16} strokeWidth={1.2} /></WinBtn>
          <WinBtn $w={58}><Restore /></WinBtn>
          <WinBtn $w={58}><X size={20} strokeWidth={1} /></WinBtn>
        </WindowControls>
      </TabStrip>
      <Toolbar>
        <ToolBtn><ArrowLeft size={20} strokeWidth={2} /></ToolBtn>
        <ToolBtn $dim><ArrowRight size={20} strokeWidth={2} /></ToolBtn>
        <ToolBtn><RotateCw size={18} strokeWidth={2} /></ToolBtn>
        <ToolBtn><Home size={19} strokeWidth={2} /></ToolBtn>
        <Address>
          <Lock size={13} fill="#c8c8c8" color="#c8c8c8" />
          <Url>manoa.hawaii.edu<UrlDim>/food/da-spot/</UrlDim></Url>
          <Star size={19} color="#ccc" strokeWidth={1.8} />
        </Address>
        <ToolBtn><FaPuzzlePiece size={18} /></ToolBtn>
        <ToolBtn><Avatar>N</Avatar></ToolBtn>
        <ToolBtn><MoreVertical size={20} /></ToolBtn>
      </Toolbar>
      <Bookmarks>
        <Bookmark $w={83} $gap={8}><BmIcon><Apps /></BmIcon>Apps</Bookmark>
        <Bookmark $w={123} $gap={8}><BmIcon><FaStar size={16} color="#e4e4e4" /></BmIcon>Bookmarks</Bookmark>
        <Bookmark $w={134}><BmIcon><Drive /></BmIcon>School Drive</Bookmark>
        <Bookmark $w={110}><BmIcon><Gmail /></BmIcon>UH Email</Bookmark>
        <Bookmark $w={162} $gap={10}><BmIcon><Docs /></BmIcon>UH Google Docs</Bookmark>
        <Bookmark $w={38}><BmIcon><FaGlobeAmericas size={17} color="#e8e8e8" /></BmIcon></Bookmark>
        <Bookmark $w={185}><BmIcon><Sq /></BmIcon>ICS 314, Fall 2021 |...</Bookmark>
        <Bookmark $w={187}><BmIcon><Fiddle /></BmIcon>JSFiddle - Code Pla...</Bookmark>
        <Bookmark $w={187}><BmIcon><Desmos /></BmIcon>Desmos | Graphing...</Bookmark>
        <Bookmark $w={150} $gap={11}><BmIcon><Pi /></BmIcon>CLRS Solutions</Bookmark>
        <Bookmark><BmIcon><Gh c="#272c31" /></BmIcon>Git Repos</Bookmark>
        <BmRight>
          <BmSep />
          <Bookmark $w={171} $gap={8} $pl={14}><BmIcon><Folder /></BmIcon>Other bookmarks</Bookmark>
          <BmSep />
          <Bookmark $gap={9} $pl={13}><BmIcon><Reading /></BmIcon>Reading list</Bookmark>
        </BmRight>
      </Bookmarks>

      <Page>
        <Viewport>
          <Shell>
            <MainArea>
              <PageTitle>Da Spot</PageTitle>
              <Columns>
                <LeftCol>
                  <HoursCard>
                    <HoursHead>Hours</HoursHead>
                    <HoursBody><Strong>Monday – Friday</Strong>Closed</HoursBody>
                  </HoursCard>
                  <MapFrame><CampusMap /></MapFrame>
                </LeftCol>
                <Article>
                  <Location>Krauss Circle</Location>
                  <Para>Da Spot Health Foods &amp; Juices offers diverse, healthy and affordable cuisine with a unique take on tasty dishes from around the world. Da Spot specializes in Mediterranean and North African food with vegan and specialty meat options that can be certified halal or kosher. Offering imaginative cuisine in exotic styles of Egyptian, Greek, French, Italian, Indian, Thai, Malaysian, Ethiopian, American, Hawaiian, Japanese, Chinese, Korean, Pacific Rim and fusion cooking.</Para>
                  <Para $last>Da Spot’s menu also features over 15 combinations of different fruit smoothies.</Para>
                  <MenuTitle>Menu</MenuTitle>
                  <Sub>Smoothies</Sub>
                  <MenuTable>
                    <colgroup><NameCol /><col /></colgroup>
                    <tbody>
                      <Row><SizeCell colSpan={2}>Small (16oz)<Gap />Medium (20oz)<Gap />Large (32oz)</SizeCell></Row>
                      <Row $thick><NameCell>Sweet Dream</NameCell><DescCell>Strawberries, Haupia, Sorbet, Soymilk</DescCell></Row>
                      <Row><NameCell>DaKine</NameCell><DescCell>Strawberries, Bananas, Lilikoi Sorbet, Passion Orange Juice</DescCell></Row>
                      <Row><NameCell>StarBerry</NameCell><DescCell>Strawberries, Lychee Sorbet, Guava Juice</DescCell></Row>
                      <Row><NameCell>&nbsp;</NameCell><DescCell>&nbsp;</DescCell></Row>
                    </tbody>
                  </MenuTable>
                </Article>
              </Columns>
            </MainArea>
            <Sidebar>
              <Places>
                <Place $h={103} $thick $pt={16}><CrepeLogo /><PlaceLink>Le Crêpe Café</PlaceLink></Place>
                <Place $h={101}><OnoLogo /><PlaceLink>Ono Seafood</PlaceLink></Place>
                <Place $h={102}><PandaLogo /><PlaceLink>Panda Express</PlaceLink></Place>
                <Place $h={116}><BeanLogo /><PlaceLink>The Bean Counter</PlaceLink></Place>
              </Places>
              <SearchBox>Site search<SearchIcon size={16} color={GREEN} /></SearchBox>
              <WidgetTitle $mt={41}>Recent Posts</WidgetTitle>
              <PostList>
                <Post><PostLink>Food Services’ Update</PostLink></Post>
                <Post><PostLink>Paradise Palms Update</PostLink></Post>
                <Post><PostLink>Modified Hours</PostLink></Post>
              </PostList>
              <WidgetTitle $mt={40}>Recent Comments</WidgetTitle>
            </Sidebar>
          </Shell>
        </Viewport>
        <Scrollbar><ArrowUp /><Thumb /><ArrowDown /></Scrollbar>
        <BackTop><FaChevronUp size={17} /></BackTop>
      </Page>

      <Taskbar>
        <StartBtn><FaWindows size={21} color="#fff" /></StartBtn>
        <SearchBar><MirrorSearch size={22} strokeWidth={1.4} />Type here to search</SearchBar>
        <SysCell $w={60}><svg width="20" height="20" viewBox="0 0 20 20"><circle cx="10" cy="10" r="8" fill="none" stroke="#fff" strokeWidth="2.6" /></svg></SysCell>
        <SysCell $w={60}><svg width="20" height="20" viewBox="0 0 20 20" fill="none" stroke="#fff" strokeWidth="1.3"><path d="M1 1h13M1 19h13M16 1h3M16 19h3"/><rect x="1" y="6" width="13" height="8"/><path d="M17 6h2v8h-2" fill="#fff"/></svg></SysCell>
        <SysCell $w={3} />
        {running.map((r, i) => <AppCell key={i}>{r}</AppCell>)}
        <AppCell $on><Chrome /></AppCell>
        <AppCell><Notepad /></AppCell>
        <AppCell><GitHubApp /></AppCell>
        <AppCell><Idea /></AppCell>
        <Tray>
          <TrayCell $w={44}><Help /></TrayCell>
          <TrayCell $w={24} />
          <TrayCell $w={40}><Moon /></TrayCell>
          <TrayCell $w={50}><Temp>78°F</Temp></TrayCell>
          <TrayCell $w={38}><ChevronUp size={22} strokeWidth={1.2} /></TrayCell>
          <TrayCell $w={24}><MeetNow /></TrayCell>
          <TrayCell $w={30}><Dropbox /></TrayCell>
          <TrayCell $w={32}><Mic size={22} strokeWidth={1.4} fill="#eee" /></TrayCell>
          <TrayCell $w={30}><Sync /></TrayCell>
          <TrayCell $w={30}><Battery /></TrayCell>
          <TrayCell $w={30}><Plane size={21} strokeWidth={1.2} /></TrayCell>
          <TrayCell $w={30}><Volume2 size={21} strokeWidth={1.2} /></TrayCell>
          <TrayCell $w={82}><Clock>7:50 PM<br />11/8/2021</Clock></TrayCell>
          <TrayCell $w={54}><NoteIcon /><Badge>24</Badge></TrayCell>
        </Tray>
      </Taskbar>
    </Screen>
  );
}
